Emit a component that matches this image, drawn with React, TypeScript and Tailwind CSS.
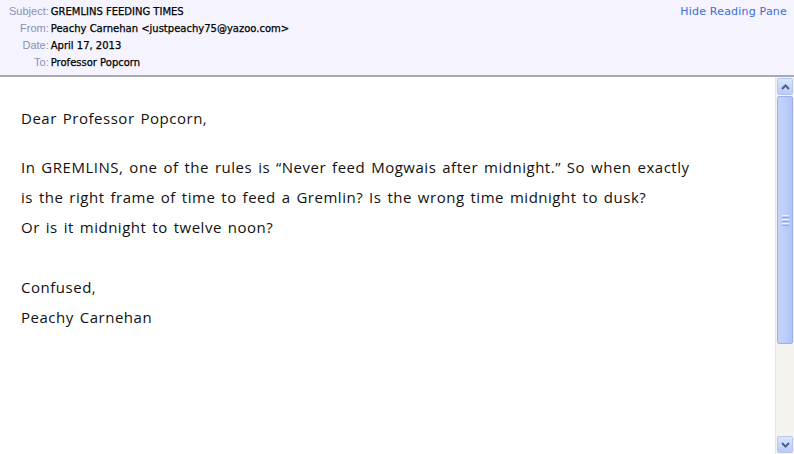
import { ReactNode } from "react";

const headerRows = [
  { label: "Subject:", value: "GREMLINS FEEDING TIMES" },
  { label: "From:", value: "Peachy Carnehan <justpeachy75@yazoo.com>" },
  { label: "Date:", value: "April 17, 2013" },
  { label: "To:", value: "Professor Popcorn" },
];

const Para = ({ children }: { children: ReactNode }) => (
  <p className="leading-[30px]">{children}</p>
);

const ScrollBar = () => (
  <div className="w-[19px] shrink-0 flex flex-col bg-[#f4f3ee] border-l border-[#e6e4dc] pl-[1px] pr-[2px] py-[1px]">
    <div className="h-[17px] w-[16px] rounded-[2px] border border-[#b6c6f4] bg-gradient-to-b from-[#dbe5fe] to-[#b7cbfb] flex items-center justify-center">
      <svg width="9" height="6" viewBox="0 0 9 6">
        <path d="M1 5 L4.5 1.5 L8 5" stroke="#4d6185" strokeWidth="2" fill="none" />
      </svg>
    </div>
    <div className="mt-[1px] h-[248px] w-[16px] rounded-[2px] border border-[#9bb0ec] bg-gradient-to-r from-[#c4d3fd] via-[#bccefc] to-[#aec4f9] flex items-center justify-center">
      <div className="flex flex-col gap-[1px]">
        <div className="h-[1px] w-[7px] bg-[#eef2fe]" />
        <div className="h-[1px] w-[7px] bg-[#8ca4e8]" />
        <div className="h-[1px] w-[7px] bg-[#eef2fe]" />
        <div className="h-[1px] w-[7px] bg-[#8ca4e8]" />
        <div className="h-[1px] w-[7px] bg-[#eef2fe]" />
        <div className="h-[1px] w-[7px] bg-[#8ca4e8]" />
      </div>
    </div>
    <div className="flex-1" />
    <div className="h-[17px] w-[16px] rounded-[2px] border border-[#b6c6f4] bg-gradient-to-b from-[#dbe5fe] to-[#b7cbfb] flex items-center justify-center">
      <svg width="9" height="6" viewBox="0 0 9 6">
        <path d="M1 1 L4.5 4.5 L8 1" stroke="#4d6185" strokeWidth="2" fill="none" />
      </svg>
    </div>
  </div>
);

export default function App() {
  return (
    <div className="w-[794px] h-[454px] flex flex-col bg-white overflow-hidden">
      <div className="h-[77px] shrink-0 bg-[#f4f3fe] border-b-2 border-[#a9a9b2] flex justify-between pt-[3px] pl-[9px] pr-[7px] text-[11px]">
        <div className="grid grid-cols-[auto_auto] gap-x-[2px] content-start">
          {headerRows.map((row) => (
            <div key={row.label} className="contents">
              <span className="font-['Liberation_Sans',sans-serif] text-right text-[#8c8fb8] leading-[17px]">
                {row.label}
              </span>
              <span className="font-['DejaVu_Sans',sans-serif] text-[10px] text-black leading-[17px] [-webkit-text-stroke:0.25px_black]">
                {row.value}
              </span>
            </div>
          ))}
        </div>
        <a className="font-['DejaVu_Sans',sans-serif] tracking-[0.2px] text-[#3b6fd9] leading-[17px] cursor-pointer">
          Hide Reading Pane
        </a>
      </div>
      <div className="flex-1 flex min-h-0">
        <div className="flex-1 pl-[21px] pt-[26px] font-['Open_Sans',sans-serif] text-[15px] text-[#111] tracking-[0.52px] [word-spacing:1.5px]">
          <Para>Dear Professor Popcorn,</Para>
          <div className="h-[19px]" />
          <Para>In GREMLINS, one of the rules is “Never feed Mogwais after midnight.” So when exactly</Para>
          <Para>is the right frame of time to feed a Gremlin? Is the wrong time midnight to dusk?</Para>
          <Para>Or is it midnight to twelve noon?</Para>
          <div className="h-[30px]" />
          <Para>Confused,</Para>
          <Para>Peachy Carnehan</Para>
        </div>
        <ScrollBar />
      </div>
    </div>
  );
}
